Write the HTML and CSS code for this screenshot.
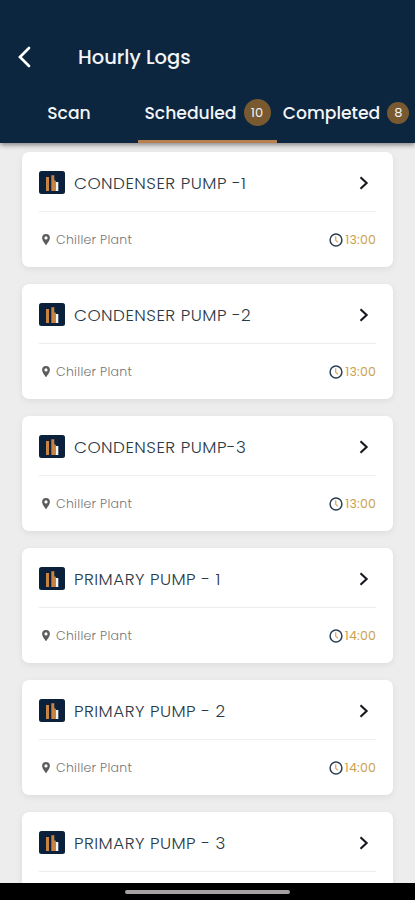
FILE: index.html
```html
<!DOCTYPE html>
<html lang="en">
<head>
<meta charset="utf-8">
<title>Hourly Logs</title>
<link rel="stylesheet" href="styles.css">
</head>
<body>
<svg width="0" height="0" class="defs">
  <symbol id="chart" viewBox="0 0 26 23"><rect width="26" height="23" rx="2.5" fill="#0b203b"/><path d="M7 6h3v14H7zM12.300 4.200h3V20h-3zM15.300 9.500h1.500V20h-1.500z" fill="#c88340"/><path d="M16.800 11h2.500v9h-2.500z" fill="#f4f4f4"/></symbol>
  <symbol id="next" viewBox="0 0 10 14"><path d="M1.500 1.300 7.600 7l-6.100 5.700" fill="none" stroke="#15191d" stroke-width="2.100"/></symbol>
  <symbol id="pin" viewBox="0 0 8 11"><path fill-rule="evenodd" d="M4 0a3.900 3.900 0 0 0-3.900 3.900C.1 6.700 4 11 4 11s3.900-4.300 3.900-7.100A3.900 3.900 0 0 0 4 0zm0 2.300a1.600 1.600 0 1 1 0 3.200 1.600 1.600 0 0 1 0-3.200z" fill="#5c5c5c"/></symbol>
  <symbol id="clock" viewBox="0 0 14 14"><circle cx="7" cy="7" r="5.900" fill="none" stroke="#2c4053" stroke-width="1.500"/><path d="M6.700 3.300v3.900l2.200 2.200" fill="none" stroke="#d5ae60" stroke-width="1.300"/></symbol>
</svg>
<div class="app">
  <header class="header">
    <div class="bar">
      <svg class="back" viewBox="0 0 14 22"><path d="M12 2 3 11l9 9" fill="none" stroke="#fff" stroke-width="2.700" stroke-linecap="round"/></svg>
      <h1 class="heading">Hourly Logs</h1>
    </div>
    <nav class="tabs">
      <div class="tab"><span class="scan">Scan</span></div>
      <div class="tab active"><span class="scheduled">Scheduled</span><span class="badge">10</span></div>
      <div class="tab"><span class="completed">Completed</span><span class="badge small">8</span></div>
    </nav>
  </header>
  <main class="list">
    <article class="card"><div class="top"><svg class="chart"><use href="#chart"/></svg><h2 class="title">CONDENSER PUMP -1</h2><svg class="next"><use href="#next"/></svg></div><div class="meta"><svg class="pin"><use href="#pin"/></svg><span class="place">Chiller Plant</span><svg class="clock"><use href="#clock"/></svg><span class="time">13:00</span></div></article>
    <article class="card"><div class="top"><svg class="chart"><use href="#chart"/></svg><h2 class="title">CONDENSER PUMP -2</h2><svg class="next"><use href="#next"/></svg></div><div class="meta"><svg class="pin"><use href="#pin"/></svg><span class="place">Chiller Plant</span><svg class="clock"><use href="#clock"/></svg><span class="time">13:00</span></div></article>
    <article class="card"><div class="top"><svg class="chart"><use href="#chart"/></svg><h2 class="title">CONDENSER PUMP-3</h2><svg class="next"><use href="#next"/></svg></div><div class="meta"><svg class="pin"><use href="#pin"/></svg><span class="place">Chiller Plant</span><svg class="clock"><use href="#clock"/></svg><span class="time">13:00</span></div></article>
    <article class="card"><div class="top"><svg class="chart"><use href="#chart"/></svg><h2 class="title">PRIMARY PUMP - 1</h2><svg class="next"><use href="#next"/></svg></div><div class="meta"><svg class="pin"><use href="#pin"/></svg><span class="place">Chiller Plant</span><svg class="clock"><use href="#clock"/></svg><span class="time">14:00</span></div></article>
    <article class="card"><div class="top"><svg class="chart"><use href="#chart"/></svg><h2 class="title">PRIMARY PUMP - 2</h2><svg class="next"><use href="#next"/></svg></div><div class="meta"><svg class="pin"><use href="#pin"/></svg><span class="place">Chiller Plant</span><svg class="clock"><use href="#clock"/></svg><span class="time">14:00</span></div></article>
    <article class="card"><div class="top"><svg class="chart"><use href="#chart"/></svg><h2 class="title">PRIMARY PUMP - 3</h2><svg class="next"><use href="#next"/></svg></div></article>
  </main>
  <footer class="system"><div class="handle"></div></footer>
</div>
</body>
</html>
```
FILE: styles.css
```css
* { box-sizing: border-box; }
body { margin: 0; font-family: Poppins, Inter, sans-serif; }
svg { display: block; flex: none; }
.defs { position: absolute; }
.app { height: 900px; display: flex; flex-direction: column; overflow: hidden; background: #ededed; }
.header { height: 143px; flex: none; background: #0c2640; color: #f3f5f6; box-shadow: 0 2px 5px rgba(0,0,0,.45); position: relative; display: flex; flex-direction: column; }
.bar { height: 83px; padding: 31px 0 0 17px; display: flex; align-items: center; }
.back { width: 14px; height: 22px; }
.heading { margin: 0 0 0 47px; padding-top: 2px; font-size: 19.500px; font-weight: 500; line-height: 30px; letter-spacing: 0; }
.tabs { flex: 1; display: grid; grid-template-columns: 138px 139px 138px; }
.tab { display: flex; align-items: center; justify-content: center; gap: 7px; font-size: 17.200px; font-weight: 500; border-bottom: 3px solid transparent; white-space: nowrap; padding-top: 2px; }
.active { border-color: #b8804c; }
.badge { width: 27px; height: 27px; border-radius: 50%; background: #79592f; font-size: 13px; font-weight: 400; display: flex; align-items: center; justify-content: center; flex: none; }
.small { width: 22px; height: 22px; }
.list { flex: 1; min-height: 0; padding: 9px 22px 0; display: flex; flex-direction: column; gap: 17px; overflow: hidden; }
.card { height: 115px; flex: none; background: #fff; border-radius: 7px; padding: 0 17px; box-shadow: 0 2px 7px rgba(0,0,0,.07); }
.top { height: 60px; display: flex; align-items: center; border-bottom: 1px solid #ededed; padding: 2px 7px 0 0; }
.chart { width: 26px; height: 23px; }
.title { flex: 1; margin: 0 0 0 9px; padding-top: 1px; font-size: 16.800px; font-weight: 300; letter-spacing: .48px; color: #2b3945; line-height: 24px; }
.next { width: 10px; height: 14px; }
.meta { height: 55px; display: flex; align-items: center; font-size: 12.500px; }
.pin { width: 8px; height: 11px; margin-left: 3px; }
.place { flex: 1; margin-left: 6px; color: #777; font-weight: 300; letter-spacing: .28px; }
.clock { width: 14px; height: 14px; margin-right: 2px; }
.time { color: #cba14e; font-weight: 400; letter-spacing: .2px; }
.system { height: 17px; flex: none; background: #000; display: flex; justify-content: center; padding-top: 7px; }
.handle { width: 165px; height: 4px; border-radius: 2px; background: #a5a1a3; }
```
